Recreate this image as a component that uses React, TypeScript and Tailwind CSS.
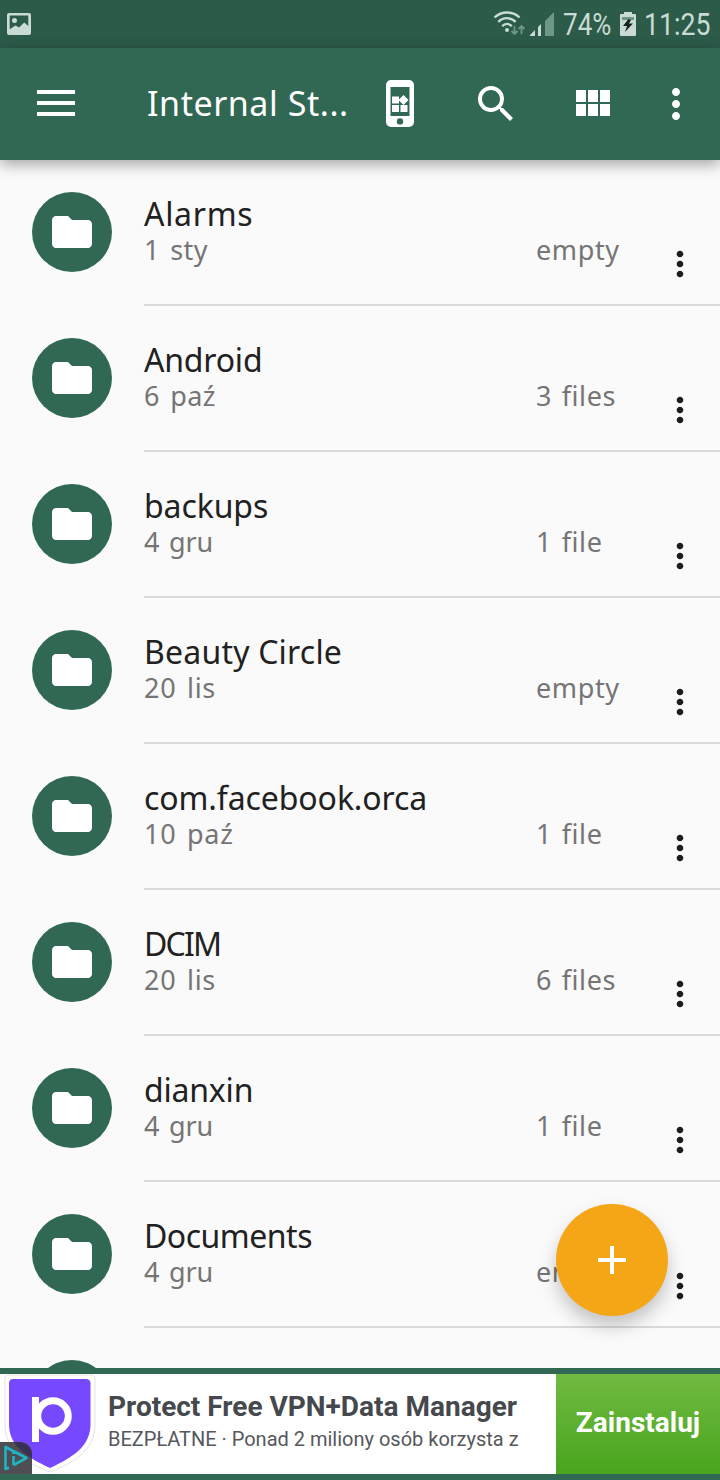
import type React from "react"
import { MdFolder, MdMoreVert, MdSearch } from "react-icons/md"

interface Folder {
  name: string
  nameClass: string
  date: string
  dateClass: string
  size: string
}

const folders: Folder[] = [
  { name: "Alarms", nameClass: "tracking-[0.7px]", date: "1 sty", dateClass: "tracking-[0.4px] [word-spacing:3px]", size: "empty" },
  { name: "Android", nameClass: "tracking-[-0.2px]", date: "6 paź", dateClass: "tracking-[0.4px] [word-spacing:3px]", size: "3 files" },
  { name: "backups", nameClass: "tracking-[-0.1px]", date: "4 gru", dateClass: "tracking-[-0.2px] [word-spacing:3px]", size: "1 file" },
  { name: "Beauty Circle", nameClass: "tracking-[0.2px]", date: "20 lis", dateClass: "tracking-[0.7px] [word-spacing:3px]", size: "empty" },
  { name: "com.facebook.orca", nameClass: "tracking-[-0.1px]", date: "10 paź", dateClass: "tracking-[0.7px] [word-spacing:3px]", size: "1 file" },
  { name: "DCIM", nameClass: "tracking-[-1.8px]", date: "20 lis", dateClass: "tracking-[0.7px] [word-spacing:3px]", size: "6 files" },
  { name: "dianxin", nameClass: "tracking-[-0.2px]", date: "4 gru", dateClass: "tracking-[-0.2px] [word-spacing:3px]", size: "1 file" },
  { name: "Documents", nameClass: "tracking-[-0.5px]", date: "4 gru", dateClass: "tracking-[-0.2px] [word-spacing:3px]", size: "empty" },
]

const StatusBar: React.FC = () => (
  <div className="flex h-12 shrink-0 items-center bg-[#2c5b4a] pl-[7px] font-['Roboto',sans-serif] text-[31px] leading-none text-[#c9dbd4]">
    <svg className="h-[22px] w-6" viewBox="0 0 24 22">
      <path
        fill="currentColor"
        fillRule="evenodd"
        d="M2 0h20a2 2 0 0 1 2 2v18a2 2 0 0 1-2 2H2a2 2 0 0 1-2-2V2a2 2 0 0 1 2-2Zm.7 2.5v13.7l5.8-3.8 3.5 2.2 5.2-5.1 4.1 3.5V2.5ZM7.500 5a2.500 2.500 0 1 1 0 5 2.500 2.500 0 0 1 0-5Z"
      />
    </svg>
    <svg className="ml-[462px] h-7 w-[33px]" viewBox="0 0 33 28">
      <g fill="none" stroke="currentColor" strokeWidth="2.4">
        <path d="M1.500 7.500C8.500.8 19.500.8 26.500 7.500" />
        <path d="M5.300 11.900c5-5 12.400-5 17.400 0" />
        <path d="M9.200 16.200c2.900-2.900 6.700-2.900 9.600 0" />
      </g>
      <circle cx="14" cy="20" r="2" fill="currentColor" />
      <g fill="none" stroke="#6f9787" strokeWidth="1.8">
        <path d="M21.500 16v8M18.500 21l3 3 3-3" />
        <path d="M28.500 24v-8M25.500 19l3-3 3 3" />
      </g>
    </svg>
    <svg className="ml-1 h-6 w-6" viewBox="0 0 24 24">
      <path fill="currentColor" d="M0 24v-1l5-5v6ZM8 24v-9l3-3v12Z" />
      <path fill="#6f9787" d="M15 24V9l9-9v24Z" />
    </svg>
    <div className="ml-[9px] w-[57px]">
      <div className="w-max origin-left scale-x-[0.84]">74%</div>
    </div>
    <svg className="h-6 w-4" viewBox="0 0 16 24">
      <path fill="currentColor" d="M4 0h8v2h3a1 1 0 0 1 1 1v20a1 1 0 0 1-1 1H1a1 1 0 0 1-1-1V3a1 1 0 0 1 1-1h3Z" />
      <path fill="#6f9787" d="M2 5h12v3H2Z" />
      <path fill="#16271f" d="M8.500 7 3 14h4l-2 6 8-8.500H9L11 8Z" />
    </svg>
    <div className="ml-2 w-[70px]">
      <div className="w-max origin-left scale-x-[0.86]">11:25</div>
    </div>
  </div>
)

const Toolbar: React.FC = () => (
  <header className="z-10 flex h-28 shrink-0 items-center bg-[#306854] pl-[37px] text-white shadow-[0_4px_14px_rgba(0,0,0,0.36)]">
    <svg className="mb-0.5 h-[26px] w-[38px]" viewBox="0 0 38 26" fill="currentColor">
      <path d="M0 0h38v4H0ZM0 11h38v4H0ZM0 22h38v4H0Z" />
    </svg>
    <h1 className="mb-0.5 ml-[72px] w-[239px] whitespace-nowrap font-['Noto_Sans',sans-serif] text-[34px] leading-none tracking-[0.55px]">
      Internal St...
    </h1>
    <svg className="h-12 w-7" viewBox="0 0 28 48" fill="currentColor">
      <path
        fillRule="evenodd"
        d="M5 0h18a5 5 0 0 1 5 5v37a5 5 0 0 1-5 5H5a5 5 0 0 1-5-5V5a5 5 0 0 1 5-5Zm-.5 7v29h19V7ZM14 38.200a3.200 3.200 0 1 0 0 6.400 3.200 3.200 0 0 0 0-6.400Z"
      />
      <path d="M6 16.500h7v7H6ZM6 25h7v7H6ZM14.500 25h7v7h-7ZM17.500 15l5 5-5 5-5-5Z" />
    </svg>
    <MdSearch className="ml-[58px] size-12" />
    <svg className="mb-0.5 ml-14 h-[26px] w-[34px]" viewBox="0 0 34 26" fill="currentColor">
      <path d="M0 0h10v12H0ZM12 0h10v12H12ZM24 0h10v12H24ZM0 14h10v12H0ZM12 14h10v12H12ZM24 14h10v12H24Z" />
    </svg>
    <MdMoreVert className="ml-[42px] size-12" />
  </header>
)

const FolderIcon: React.FC = () => (
  <div className="mt-8 flex size-20 shrink-0 items-center justify-center rounded-full bg-[#306854]">
    <MdFolder className="size-12 text-white" />
  </div>
)

const FolderRow: React.FC<{ folder: Folder }> = ({ folder }) => (
  <li className="flex h-[146px] shrink-0 pl-8">
    <FolderIcon />
    <div className="ml-8 flex flex-1 border-b-2 border-[#dadada] pt-[34px] font-['Noto_Sans',sans-serif]">
      <div className="w-[392px]">
        <p className={`text-[32px] leading-10 text-[#212121] ${folder.nameClass}`}>{folder.name}</p>
        <p className={`-mt-0.5 text-[27px] leading-9 text-[#757575] ${folder.dateClass}`}>{folder.date}</p>
      </div>
      <p className="w-[124px] pt-[38px] text-[27px] leading-9 tracking-[0.6px] text-[#757575] [word-spacing:2px]">
        {folder.size}
      </p>
      <MdMoreVert className="mt-[50px] size-10 shrink-0 text-[#1c1c1c]" />
    </div>
  </li>
)

const AdBanner: React.FC = () => (
  <div className="relative flex h-28 shrink-0 border-y-6 border-[#306854] bg-white font-['Roboto',sans-serif]">
    <svg className="h-[100px] w-[108px] shrink-0" viewBox="0 0 108 100">
      <path
        d="M9 1h82q4 0 4 5v44c0 26-20 38-45 48C25 88 5 76 5 50V6q0-5 4-5Z"
        fill="#fff"
        stroke="#e3e3e3"
        strokeWidth="1"
      />
      <path d="M13 5h73q4.500 0 4.500 4.500V50c0 22-17 33-40.500 44C26 83 9 72 9 50V9.500Q9 5 13 5Z" fill="#7648ff" />
      <circle cx="53" cy="42" r="15.300" fill="none" stroke="#fff" strokeWidth="7" />
      <path d="M32 23h7v45h-7Z" fill="#fff" />
    </svg>
    <div className="w-[448px] pt-[17px]">
      <p className="whitespace-nowrap text-[28px] font-bold leading-8 text-[#45494e]">Protect Free VPN+Data Manager</p>
      <p className="whitespace-nowrap text-[20px] leading-8 text-[#55585c]">BEZPŁATNE · Ponad 2 miliony osób korzysta z</p>
    </div>
    <button className="flex-1 bg-linear-to-b from-[#70ba40] to-[#48a51c] pb-0.5 text-[28px] font-bold text-white">
      Zainstaluj
    </button>
    <div className="absolute bottom-0 left-0 h-8 w-8 rounded-tr-xl bg-[#302f35]/85">
      <svg className="size-8" viewBox="0 0 32 32" fill="none" stroke="#1fb5c6" strokeWidth="2.6">
        <path d="M9 25.500 5.500 27V5l21 11-13 7" strokeLinejoin="round" />
        <path d="M13.500 14v9M13.500 9.500v2.500" />
      </svg>
    </div>
  </div>
)

const App: React.FC = () => (
  <div className="relative flex h-[1480px] w-[720px] flex-col overflow-hidden bg-[#fafafa]">
    <StatusBar />
    <Toolbar />
    <ul className="flex min-h-0 flex-1 flex-col overflow-hidden">
      {folders.map((folder) => (
        <FolderRow key={folder.name} folder={folder} />
      ))}
      <li className="shrink-0 pl-8">
        <FolderIcon />
      </li>
    </ul>
    <AdBanner />
    <button className="absolute bottom-[164px] right-[52px] flex size-28 items-center justify-center rounded-full bg-[#f5a617] shadow-[0_10px_18px_rgba(0,0,0,0.22)]">
      <svg className="size-7" viewBox="0 0 28 28" fill="#fff">
        <path d="M12 0h4v12h12v4H16v12h-4V16H0v-4h12Z" />
      </svg>
    </button>
  </div>
)

export default App
